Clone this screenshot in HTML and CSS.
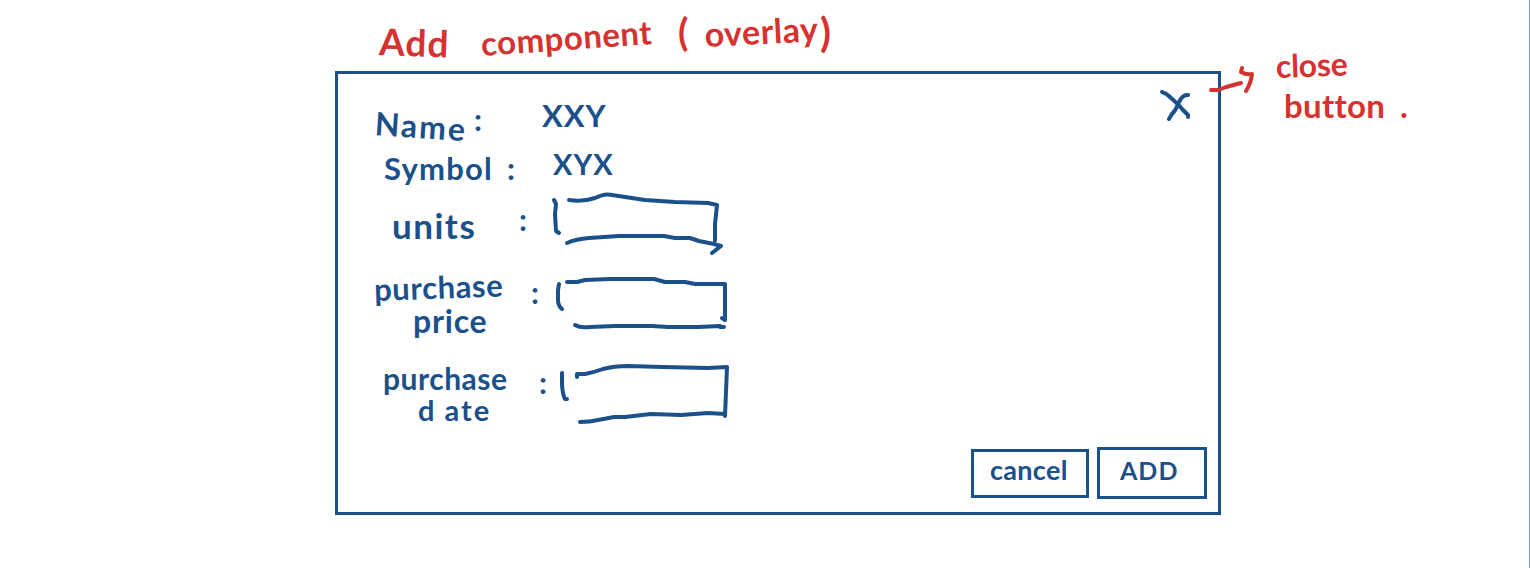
FILE: index.html
```
<!DOCTYPE html>
<html lang="en">
<head>
<meta charset="utf-8">
<title>Add component (overlay)</title>
<link rel="stylesheet" href="styles.css">
</head>
<body>
<div class="board">
  <h1 class="title"><span class="w t-add">Add</span><span class="w t-component">component</span><span class="w t-paren">(</span><span class="w t-overlay">overlay</span><span class="w t-end">)</span></h1>
  <div class="stage">
    <section class="dialog">
      <form class="fields">
        <div class="row row-name"><span class="label"><span class="w l-name">Name</span></span><span class="w colon c-name">:</span><span class="w v-name">XXY</span></div>
        <div class="row row-symbol"><span class="label"><span class="w l-symbol">Symbol</span></span><span class="w colon c-symbol">:</span><span class="w v-symbol">XYX</span></div>
        <div class="row row-units"><span class="label"><span class="w l-units">units</span></span><span class="w colon c-units">:</span>
          <svg class="box" width="190" height="70" viewBox="545 190 190 70"><path d="M554 200l2 4-1 10 1 17 3 2M569 200q14 2 26-2 10-5 17-3l33 5 30 2 33 1 9 2-2 19v17M567 243q9-4 22-5l30-2h45l11 2h15l9 3 15 3 7 2-9 7"/></svg></div>
        <div class="row row-price"><span class="label"><span class="w l-purchase1">purchase</span><span class="w l-price">price</span></span><span class="w colon c-price">:</span>
          <svg class="box" width="190" height="90" viewBox="545 260 190 90"><path d="M559 284l-1 6v10q0 6 4 9M567 282h10l8-2 25-1h44l11 3h20l10 2h30v36l-3-2M575 325q5 3 15 2l25-1 37 0 16 1 30 0 22-1m0 1h4"/></svg></div>
        <div class="row row-date"><span class="label"><span class="w l-purchase2">purchase</span><span class="w l-date">date</span></span><span class="w colon c-date">:</span>
          <svg class="box" width="190" height="90" viewBox="545 350 190 90"><path d="M562 373v12q1 11 3 14h2M577 377v-3h8q10-2 18-5 11-3 25-3l35 1 45 1 19-1-1 25-1 24M580 422q10 0 18-2l16-3h11l26-3 30 1 27-2 17 1"/></svg></div>
      </form>
      <aside class="side">
        <button class="close" aria-label="close"><svg width="30" height="32" viewBox="1159 90 30 32"><path d="M1161 92q4 1 8 5 9 8 13 13l5 5v2M1187 95q-5-1-9 7-3 8-7 12l-3 5"/></svg></button>
        <div class="actions"><button class="btn cancel"><span class="w b-cancel">cancel</span></button><button class="btn add"><span class="w b-add">ADD</span></button></div>
      </aside>
    </section>
    <div class="note">
      <svg class="arrow" width="50" height="34" viewBox="1208 64 50 34"><path d="M1211 90h7l8-3 15-4M1242 68l-1 4q5 3 11 2-1 9-6 17"/></svg>
      <p class="note-text"><span class="w n-close">close</span><span class="w n-button">button</span><span class="w n-dot">.</span></p>
    </div>
  </div>
</div>
</body>
</html>
```
FILE: styles.css
```
* { box-sizing: border-box; }
body { margin: 0; background: #fff; font-family: Lato, "Liberation Sans", sans-serif; font-weight: 700; color: #1b508b; }
.board { width: 1530px; height: 568px; overflow: hidden; border-right: 1px solid #7a9cc6; }
.w { display: inline-block; line-height: 1; white-space: nowrap; transform-origin: 0 50%; }
svg { display: block; fill: none; stroke: #1b508b; stroke-width: 4; stroke-linecap: round; stroke-linejoin: round; }

.title { margin: 0; height: 71px; padding: 18px 0 0 379px; display: flex; color: #d63230; font-size: 35px; font-weight: 700; }
.t-add { width: 102px; padding-top: 4px; font-size: 37px; letter-spacing: 1px; transform: rotate(2deg); }
.t-component { width: 197px; padding-top: 9px; font-size: 33px; letter-spacing: .5px; transform: rotate(-4deg); }
.t-paren { width: 27px; margin-top: -6px; font-size: 38px; }
.t-overlay { width: 115px; margin-top: -1px; font-size: 34px; letter-spacing: .5px; transform: rotate(-3deg); }
.t-end { margin-top: -6px; font-size: 40px; }

.stage { display: flex; padding-left: 335px; }
.dialog { width: 886px; height: 444px; flex: none; border: 3px solid #1b508b; display: flex; justify-content: space-between; }
.fields { width: 400px; padding-top: 23px; }
.row { display: flex; align-items: center; }
.label { display: flex; flex-direction: column; align-items: flex-start; flex: none; }
.colon { flex: none; font-size: 31px; }
.row-name { height: 45px; padding-left: 37px; }
.row-name .label { width: 99px; padding-top: 6px; }
.l-name { font-size: 32px; letter-spacing: 2px; transform: rotate(4deg); }
.c-name { width: 68px; }
.v-name { font-size: 31px; letter-spacing: 1px; margin-top: -8px; }
.row-symbol { height: 48px; padding-left: 46px; }
.row-symbol .label { width: 123px; padding-top: 4px; }
.l-symbol { font-size: 31px; letter-spacing: 1.2px; }
.c-symbol { width: 46px; padding-top: 4px; height: 35px; }
.v-symbol { font-size: 29px; letter-spacing: 1px; margin-top: -6px; }
.row-units { height: 70px; padding-left: 54px; }
.row-units .label { width: 127px; padding-top: 1px; }
.l-units { font-size: 35px; letter-spacing: 1.5px; }
.c-units { width: 26px; margin-top: -12px; }
.row-price { height: 90px; padding-left: 36px; }
.row-price .label { width: 157px; }
.l-purchase1 { font-size: 31px; letter-spacing: .6px; transform: rotate(-2deg); }
.l-price { font-size: 32px; letter-spacing: .8px; margin: 0 0 0 39px; }
.c-price { width: 14px; margin-top: -26px; }
.row-date { height: 90px; padding-left: 45px; }
.row-date .label { width: 156px; }
.l-purchase2 { font-size: 30px; letter-spacing: .5px; margin-top: -4px; }
.l-date { font-size: 29px; margin: 2px 0 0 35px; letter-spacing: 2px; }
.l-date::first-letter { letter-spacing: 10px; }
.c-date { width: 6px; margin-top: -26px; }
.box { flex: none; }

.side { display: flex; flex-direction: column; align-items: flex-end; justify-content: space-between; padding: 16px 11px 13px 0; }
button { padding: 0; margin: 0; border: 0; background: none; font: inherit; color: inherit; }
.close { margin-right: 17px; }
.actions { display: flex; align-items: center; gap: 8px; }
.btn { border: 3px solid #1b508b; text-align: left; display: flex; align-items: flex-start; }
.cancel { width: 118px; height: 49px; padding: 4px 0 0 16px; }
.add { width: 110px; height: 52px; padding: 8px 0 0 20px; }
.b-cancel { font-size: 27px; letter-spacing: .3px; }
.b-add { font-size: 25px; letter-spacing: 1px; }

.note { display: flex; margin-left: -13px; color: #d63230; }
.arrow { stroke: #d63230; position: relative; top: -7px; }
.note-text { margin: -21px 0 0 18px; display: grid; grid-template-columns: 124px 20px; grid-template-rows: 39px 40px; }
.n-close { grid-column: 1 / 3; font-size: 32px; letter-spacing: -.3px; transform: rotate(-2deg); }
.n-button { font-size: 33px; margin-left: 8px; letter-spacing: .3px; }
.n-dot { font-size: 33px; }
```
